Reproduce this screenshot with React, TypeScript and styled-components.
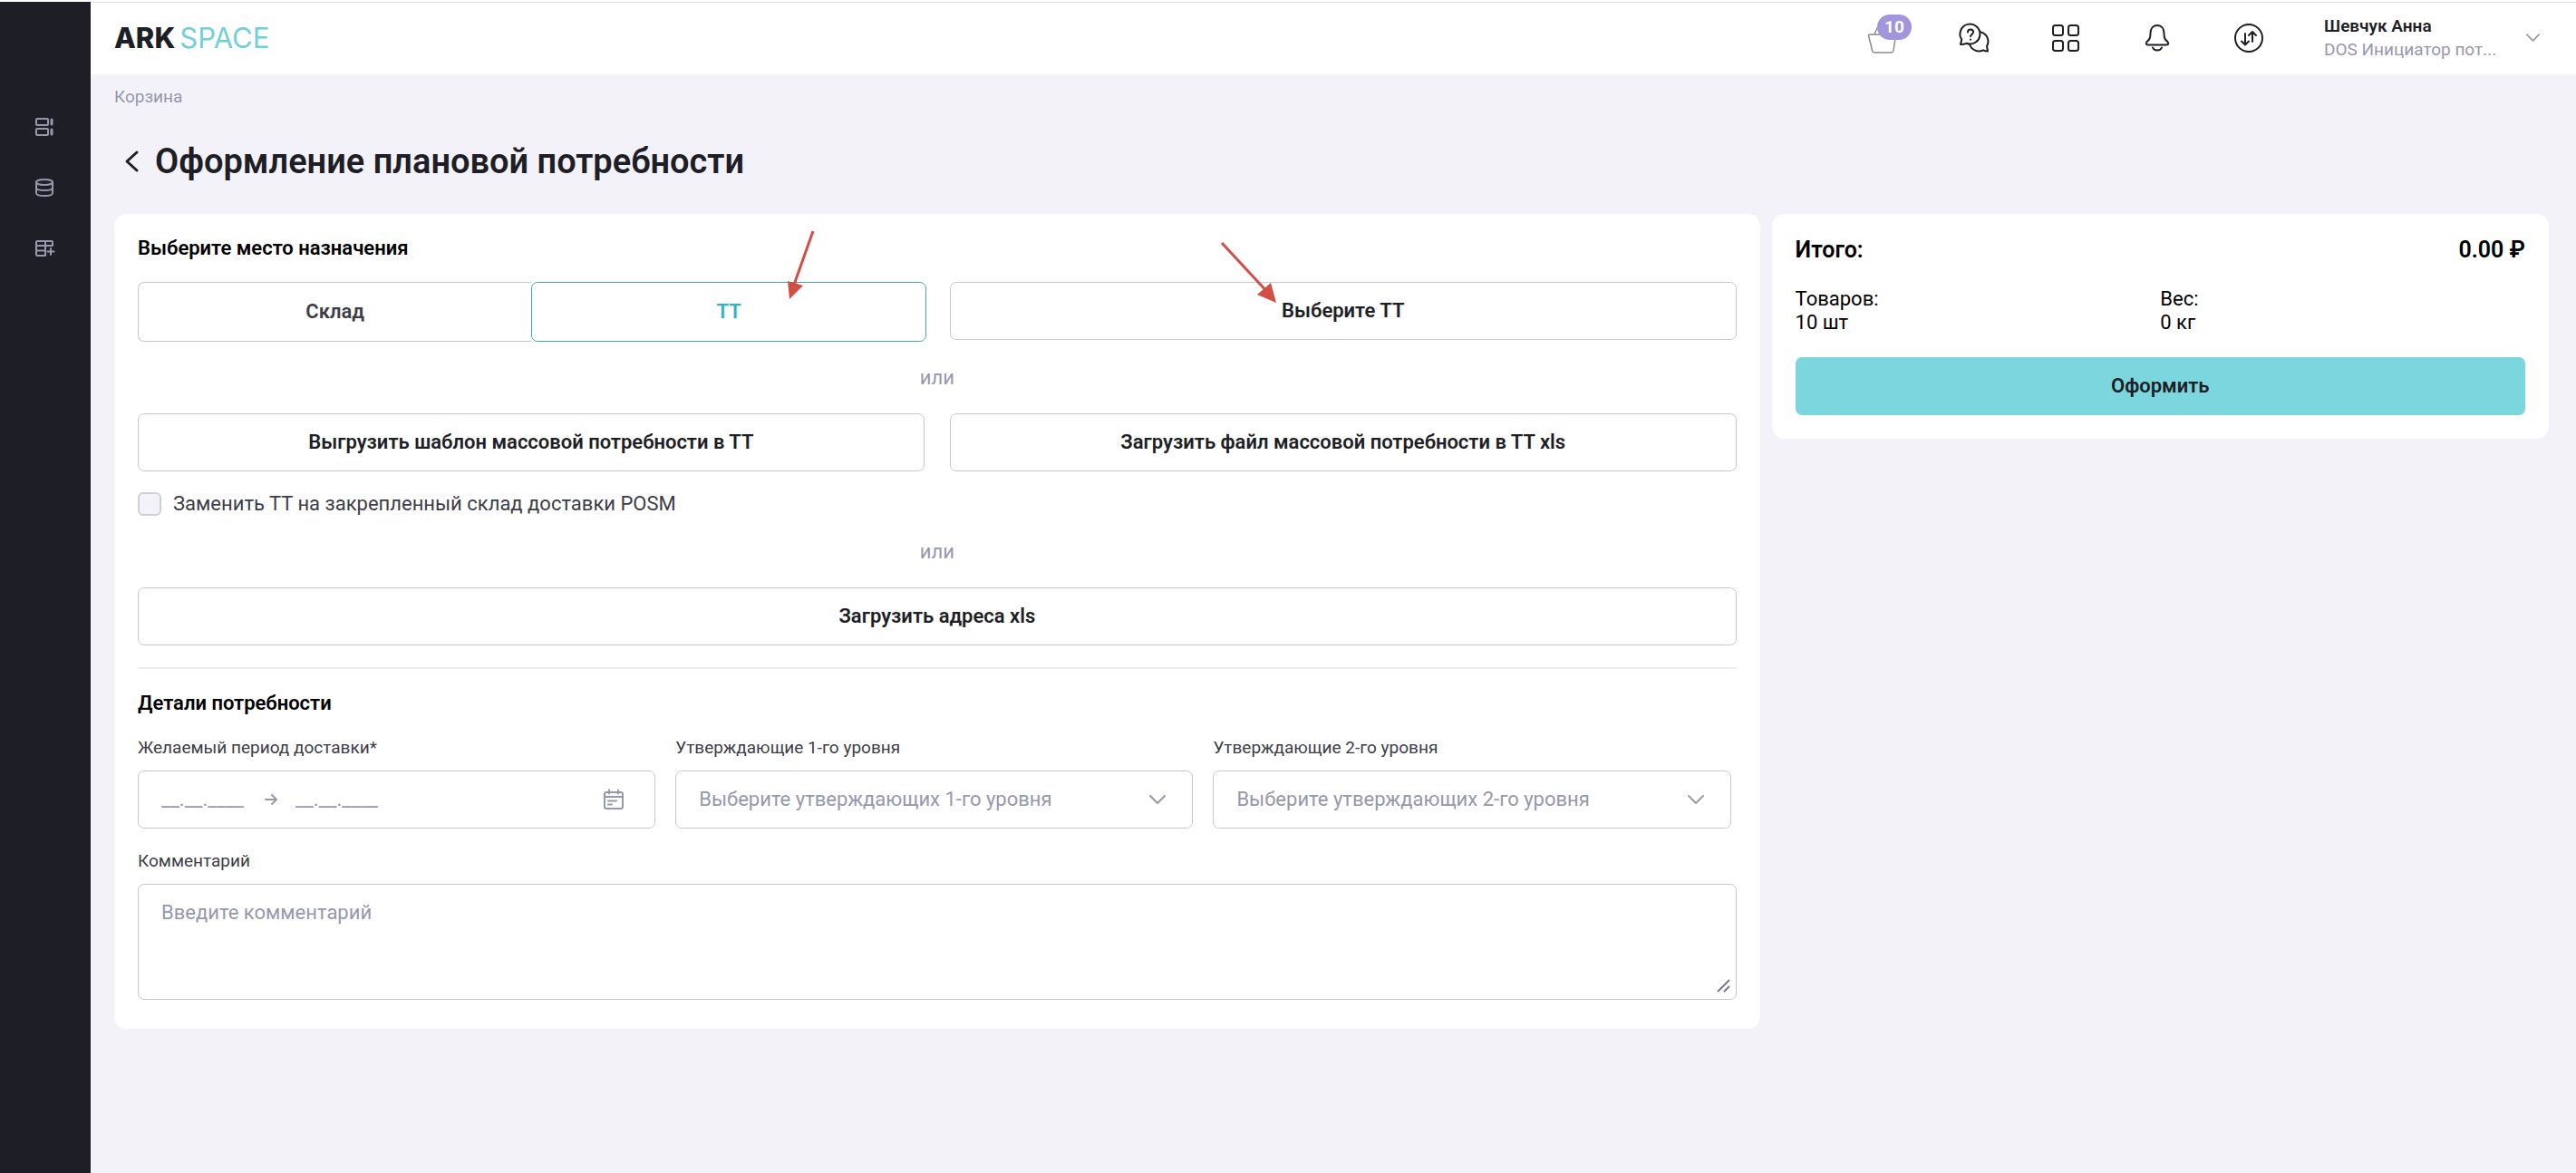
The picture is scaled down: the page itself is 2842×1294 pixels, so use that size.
import React, { useState } from "react";
import styled, { createGlobalStyle, css } from "styled-components";

const colors = {
  ink: "#1e1f26",
  text: "#3c3d47",
  muted: "#9698ac",
  line: "#c6c7d2",
  page: "#f3f2f8",
  accent: "#7cd6dd",
  active: "#2fb5c2",
  activeLine: "#43a9ae",
  mark: "#d24f45",
};

const GlobalStyle = createGlobalStyle`
  * { box-sizing: border-box; }
  body {
    margin: 0;
    background: ${colors.page};
    font-family: Roboto, "Liberation Sans", sans-serif;
    font-size: 22px;
    line-height: 26px;
    color: #000;
  }
  button, input, select, textarea { font: inherit; }
  h1, h2, p, dl, dd { margin: 0; }
`;

const Shell = styled.div`
  display: flex;
  min-height: 100vh;
  border-top: 2px solid #fff;
`;

const Sidebar = styled.nav`
  flex: 0 0 100px;
  display: flex;
  flex-direction: column;
  align-items: center;
  gap: 43px;
  padding: 126px 2px 0 0;
  background: ${colors.ink};
`;

const IconButton = styled.button`
  position: relative;
  display: flex;
  padding: 0;
  border: 0;
  background: none;
  color: ${(p) => p.color || colors.ink};
  cursor: pointer;
`;

const Page = styled.div`
  flex: 1;
  min-width: 0;
`;

const Header = styled.header`
  display: flex;
  align-items: center;
  height: 80px;
  padding: 0 40px 2px 26px;
  border-top: 1px solid #dedee2;
  background: #fff;
`;

const Logo = styled.a`
  display: flex;
  gap: 5px;
  margin-right: auto;
  font-family: Inter, "Liberation Sans", sans-serif;
  font-size: 31px;
  line-height: 36px;
  font-weight: 400;
  color: #74cfd6;
  text-decoration: none;

  strong {
    font-weight: 800;
    color: ${colors.ink};
  }
`;

const Tools = styled.div`
  display: flex;
  gap: 65px;
  margin-right: 65px;
`;

const Badge = styled.span`
  position: absolute;
  left: 12px;
  top: -8px;
  padding: 0 8px;
  border-radius: 14px;
  background: #a295dc;
  color: #fff;
  font-size: 19px;
  line-height: 28px;
  font-weight: 700;
`;

const Profile = styled.button`
  display: flex;
  align-items: center;
  gap: 33px;
  padding: 0;
  border: 0;
  background: none;
  text-align: left;
  font-size: 19px;
  color: ${colors.muted};
  cursor: pointer;
`;

const ProfileText = styled.span`
  width: 190px;
`;

const ProfileLine = styled.span<{ $strong?: boolean }>`
  display: block;
  white-space: nowrap;
  font-weight: ${(p) => (p.$strong ? 600 : 400)};
  color: ${(p) => (p.$strong ? colors.ink : colors.muted)};
`;

const Content = styled.main`
  padding: 13px 30px 26px 26px;
`;

const Crumb = styled.a`
  display: block;
  font-size: 19px;
  line-height: 24px;
  color: ${colors.muted};
  text-decoration: none;
`;

const TitleRow = styled.div`
  display: flex;
  align-items: center;
  gap: 17px;
  padding: 35px 0 34px 10px;
`;

const Title = styled.h1`
  font-size: 38px;
  line-height: 48px;
  font-weight: 600;
  color: ${colors.ink};
`;

const Columns = styled.div`
  display: grid;
  grid-template-columns: 36fr 17fr;
  align-items: start;
  gap: 13px;
`;

const Card = styled.section`
  padding: 26px;
  border-radius: 14px;
  background: #fff;
`;

const FormCard = styled(Card)`
  padding-bottom: 32px;
`;

const SectionTitle = styled.h2`
  font-size: 22px;
  line-height: 24px;
  font-weight: 600;
`;

const Pair = styled.div<{ $top?: boolean }>`
  display: grid;
  grid-template-columns: 1fr 1fr;
  align-items: start;
  gap: 28px;
  margin-top: ${(p) => (p.$top ? 25 : 0)}px;
`;

const buttonBase = css`
  position: relative;
  width: 100%;
  height: 64px;
  border-radius: 7px;
  font-weight: 600;
  color: ${colors.ink};
  cursor: pointer;
`;

const OutlineButton = styled.button`
  ${buttonBase}
  border: 1px solid ${colors.line};
  background: #fff;
`;

const PrimaryButton = styled.button`
  ${buttonBase}
  border: 0;
  background: ${colors.accent};
`;

const Segments = styled.div`
  display: flex;
  height: 66px;
  margin-right: -2px;
`;

const Segment = styled.button<{ $active: boolean }>`
  position: relative;
  flex: 1;
  border: 1px solid ${(p) => (p.$active ? colors.activeLine : colors.line)};
  border-radius: 7px;
  background: #fff;
  font-weight: 600;
  color: ${(p) => (p.$active ? colors.active : colors.text)};
  z-index: ${(p) => (p.$active ? 1 : 0)};
  cursor: pointer;

  ${(p) =>
    !p.$active &&
    css`
      &:first-child {
        border-right: 0;
        border-radius: 7px 0 0 7px;
      }
      &:last-child {
        border-left: 0;
        border-radius: 0 7px 7px 0;
      }
    `}
`;

const Or = styled.p`
  padding: 27px 0 26px;
  text-align: center;
  color: ${colors.muted};
`;

const CheckLabel = styled.label`
  display: flex;
  align-items: center;
  gap: 13px;
  margin-top: 23px;
  color: ${colors.text};
`;

const CheckBox = styled.input`
  appearance: none;
  width: 26px;
  height: 26px;
  margin: 0;
  border: 2px solid #d0d0da;
  border-radius: 6px;
  background: ${colors.page};

  &:checked { background: ${colors.accent}; }
`;

const Divider = styled.hr`
  height: 2px;
  margin: 24px 0 26px;
  border: 0;
  background: #ebebf0;
`;

const Fields = styled.div`
  display: grid;
  grid-template-columns: repeat(3, 1fr);
  gap: 22px;
  padding: 25px 6px 24px 0;
`;

const FieldLabel = styled.label`
  display: block;
  margin-bottom: 13px;
  font-size: 19px;
  line-height: 24px;
  color: ${colors.text};
`;

const frame = css`
  border: 1px solid ${colors.line};
  border-radius: 7px;
  background: #fff;
  color: ${colors.muted};
`;

const DateFrame = styled.div`
  ${frame}
  display: flex;
  align-items: center;
  height: 64px;
  padding: 0 33px 0 25px;
`;

const DateInput = styled.input`
  width: 94px;
  padding: 0;
  border: 0;
  outline: 0;
  background: none;
  color: ${colors.ink};

  &::placeholder { color: ${colors.muted}; opacity: 1; }
`;

const DateArrow = styled.span`
  display: flex;
  margin: 0 19px;
`;

const CalendarButton = styled(IconButton)`
  margin-left: auto;
`;

const SelectWrap = styled.div`
  position: relative;
  display: flex;
  align-items: center;
`;

const Select = styled.select`
  ${frame}
  appearance: none;
  width: 100%;
  height: 64px;
  padding: 0 60px 0 25px;
`;

const SelectIcon = styled.span`
  position: absolute;
  right: 30px;
  display: flex;
  color: ${colors.muted};
  pointer-events: none;
`;

const AreaWrap = styled.div`
  position: relative;
`;

const Area = styled.textarea`
  ${frame}
  display: block;
  width: 100%;
  height: 128px;
  padding: 18px 25px;
  resize: none;

  &::placeholder { color: ${colors.muted}; opacity: 1; }
`;

const Grip = styled.span`
  position: absolute;
  right: 7px;
  bottom: 8px;
  display: flex;
`;

const Total = styled.div`
  display: flex;
  justify-content: space-between;
  font-size: 25px;
  line-height: 28px;
  font-weight: 600;
`;

const Stats = styled.dl`
  display: grid;
  grid-template-columns: 1fr 1fr;
  padding: 27px 0 25px;
`;

const ShortArrow = styled.svg`
  position: absolute;
  right: 121px;
  top: -60px;
  pointer-events: none;
`;

const LongArrow = styled.svg`
  position: absolute;
  left: calc(50% - 138px);
  top: -48px;
  pointer-events: none;
`;

type IconProps = {
  size?: number;
  box?: number;
  stroke?: number;
  children: React.ReactNode;
};

const Icon = ({ size = 36, box = size, stroke = 2, children }: IconProps) => (
  <svg
    width={size}
    height={size}
    viewBox={`0 0 ${box} ${box}`}
    fill="none"
    stroke="currentColor"
    strokeWidth={stroke}
    strokeLinecap="round"
    strokeLinejoin="round"
    aria-hidden="true"
  >
    {children}
  </svg>
);

const ChevronDown = ({ size = 18 }: { size?: number }) => (
  <Icon size={size} box={18}>
    <path d="M1 5l8 8 8-8" />
  </Icon>
);

const LevelSelect = ({ level }: { level: number }) => (
  <div>
    <FieldLabel htmlFor={`level-${level}`}>
      Утверждающие {level}-го уровня
    </FieldLabel>
    <SelectWrap>
      <Select id={`level-${level}`}>
        <option>Выберите утверждающих {level}-го уровня</option>
      </Select>
      <SelectIcon>
        <ChevronDown />
      </SelectIcon>
    </SelectWrap>
  </div>
);

export default function App() {
  const [place, setPlace] = useState("ТТ");

  return (
    <>
      <GlobalStyle />
      <Shell>
        <Sidebar>
          <IconButton color={colors.muted} aria-label="Витрина">
            <Icon size={24}>
              <rect x="3" y="3" width="13" height="7" rx="1" />
              <rect x="3" y="14" width="13" height="7" rx="1" />
              <path d="M20 4v5M20 15v5" strokeWidth="3" />
            </Icon>
          </IconButton>
          <IconButton color={colors.muted} aria-label="Данные">
            <Icon size={24}>
              <ellipse cx="12" cy="6" rx="9" ry="3" />
              <path d="M3 6v12c0 2 4 3 9 3s9-1 9-3V6M3 12c0 2 4 3 9 3s9-1 9-3" />
            </Icon>
          </IconButton>
          <IconButton color={colors.muted} aria-label="Добавить таблицу">
            <Icon size={24}>
              <path d="M13 20H4a1 1 0 0 1-1-1V5a1 1 0 0 1 1-1h16a1 1 0 0 1 1 1v4H3M3 14.500h10M13 4v16M19 12v7M15.500 15.500h7" />
            </Icon>
          </IconButton>
        </Sidebar>
        <Page>
          <Header>
            <Logo href="#">
              <strong>ARK</strong>
              <span>SPACE</span>
            </Logo>
            <Tools>
              <IconButton aria-label="Корзина">
                <Icon stroke={1.5}>
                  <g stroke="#8b8b90">
                    <path d="M3.500 14h28a1 1 0 0 1 1 1.200L30 31.500a3 3 0 0 1-3 2.500H9.500a3 3 0 0 1-3-2.500L2.500 15.200a1 1 0 0 1 1-1.200zM9 13.500L14 3h8l5 10.500" />
                  </g>
                </Icon>
                <Badge>10</Badge>
              </IconButton>
              <IconButton aria-label="Помощь">
                <Icon>
                  <path d="M3 25l1.200-5.500A11 11 0 1 1 9.500 23.800c-2 1-4.500 1.200-6.500 1.200z" />
                  <path d="M25.500 11.500a10.500 10.500 0 0 1 6.500 15.500l1 5.500c-2 0-3.500-.3-5-1.200-6 2.700-12.500.2-15-6.300" />
                  <path d="M11 11.500c0-4 6-4 6 0 0 2.200-3 2.300-3 4.800M14 19.500v.2" />
                </Icon>
              </IconButton>
              <IconButton aria-label="Приложения">
                <Icon>
                  <rect x="4" y="4" width="11" height="11" rx="2.500" />
                  <rect x="21" y="4" width="11" height="11" rx="2.500" />
                  <rect x="4" y="21" width="11" height="11" rx="2.500" />
                  <rect x="21" y="21" width="11" height="11" rx="2.500" />
                </Icon>
              </IconButton>
              <IconButton aria-label="Уведомления">
                <Icon>
                  <path d="M18 4c-5 0-7.500 4-7.500 8.500 0 6-1.200 7-3.800 9.500-1.700 1.800-1 3.500 1 3.500h20.600c2 0 2.700-1.700 1-3.500-2.600-2.500-3.800-3.500-3.800-9.500C25.500 8 23 4 18 4zM13 28.500c1.500 4 8.500 4 10 0" />
                </Icon>
              </IconButton>
              <IconButton aria-label="Обмен">
                <Icon>
                  <circle cx="18" cy="18" r="15" />
                  <path d="M14 13v12M10 21.500l4 4 4-4M22 22V11M18 15l4-4 4 4" />
                </Icon>
              </IconButton>
            </Tools>
            <Profile>
              <ProfileText>
                <ProfileLine $strong>Шевчук Анна</ProfileLine>
                <ProfileLine>DOS Инициатор пот...</ProfileLine>
              </ProfileText>
              <ChevronDown size={15} />
            </Profile>
          </Header>
          <Content>
            <Crumb href="#">Корзина</Crumb>
            <TitleRow>
              <IconButton aria-label="Назад">
                <svg width="18" height="26" viewBox="0 0 18 26" fill="none" stroke="currentColor" strokeWidth="3" strokeLinecap="round" strokeLinejoin="round">
                  <path d="M15 3L4 13l11 10" />
                </svg>
              </IconButton>
              <Title>Оформление плановой потребности</Title>
            </TitleRow>
            <Columns>
              <FormCard>
                <SectionTitle>Выберите место назначения</SectionTitle>
                <Pair $top>
                  <Segments>
                    {["Склад", "ТТ"].map((name) => (
                      <Segment
                        key={name}
                        $active={place === name}
                        aria-pressed={place === name}
                        onClick={() => setPlace(name)}
                      >
                        {name}
                        {name === "ТТ" && (
                          <ShortArrow width="34" height="80" viewBox="0 0 34 80" aria-hidden="true">
                            <path d="M31 3L10 62" stroke={colors.mark} strokeWidth="3" />
                            <path d="M3 58l17 5L5 78z" fill={colors.mark} />
                          </ShortArrow>
                        )}
                      </Segment>
                    ))}
                  </Segments>
                  <OutlineButton>
                    Выберите ТТ
                    <LongArrow width="68" height="72" viewBox="0 0 68 72" aria-hidden="true">
                      <path d="M4 4l52 56" stroke={colors.mark} strokeWidth="3" />
                      <path d="M58 48l6 22-21-9z" fill={colors.mark} />
                    </LongArrow>
                  </OutlineButton>
                </Pair>
                <Or>или</Or>
                <Pair>
                  <OutlineButton>Выгрузить шаблон массовой потребности в ТТ</OutlineButton>
                  <OutlineButton>Загрузить файл массовой потребности в ТТ xls</OutlineButton>
                </Pair>
                <CheckLabel>
                  <CheckBox type="checkbox" />
                  Заменить ТТ на закрепленный склад доставки POSM
                </CheckLabel>
                <Or>или</Or>
                <OutlineButton>Загрузить адреса xls</OutlineButton>
                <Divider />
                <SectionTitle>Детали потребности</SectionTitle>
                <Fields>
                  <div>
                    <FieldLabel htmlFor="date-from">Желаемый период доставки*</FieldLabel>
                    <DateFrame>
                      <DateInput id="date-from" placeholder="__.__.____" />
                      <DateArrow>
                        <Icon size={16}>
                          <path d="M2 8h12M9 3l5 5-5 5" />
                        </Icon>
                      </DateArrow>
                      <DateInput aria-label="Конец периода" placeholder="__.__.____" />
                      <CalendarButton color={colors.muted} aria-label="Календарь">
                        <Icon size={24}>
                          <rect x="2" y="4" width="20" height="18" rx="2" />
                          <path d="M2 9h20M7 1.500v4M17 1.500v4M6 13.500h9M6 17.500h4" />
                        </Icon>
                      </CalendarButton>
                    </DateFrame>
                  </div>
                  <LevelSelect level={1} />
                  <LevelSelect level={2} />
                </Fields>
                <FieldLabel htmlFor="comment">Комментарий</FieldLabel>
                <AreaWrap>
                  <Area id="comment" placeholder="Введите комментарий" />
                  <Grip>
                    <svg width="15" height="15" viewBox="0 0 15 15" stroke="#777986" strokeWidth="2" aria-hidden="true">
                      <path d="M1 14L14 1M8 14l6-6" />
                    </svg>
                  </Grip>
                </AreaWrap>
              </FormCard>
              <Card>
                <Total>
                  <span>Итого:</span>
                  <span>0.00 ₽</span>
                </Total>
                <Stats>
                  <div>
                    <dt>Товаров:</dt>
                    <dd>10 шт</dd>
                  </div>
                  <div>
                    <dt>Вес:</dt>
                    <dd>0 кг</dd>
                  </div>
                </Stats>
                <PrimaryButton>Оформить</PrimaryButton>
              </Card>
            </Columns>
          </Content>
        </Page>
      </Shell>
    </>
  );
}
